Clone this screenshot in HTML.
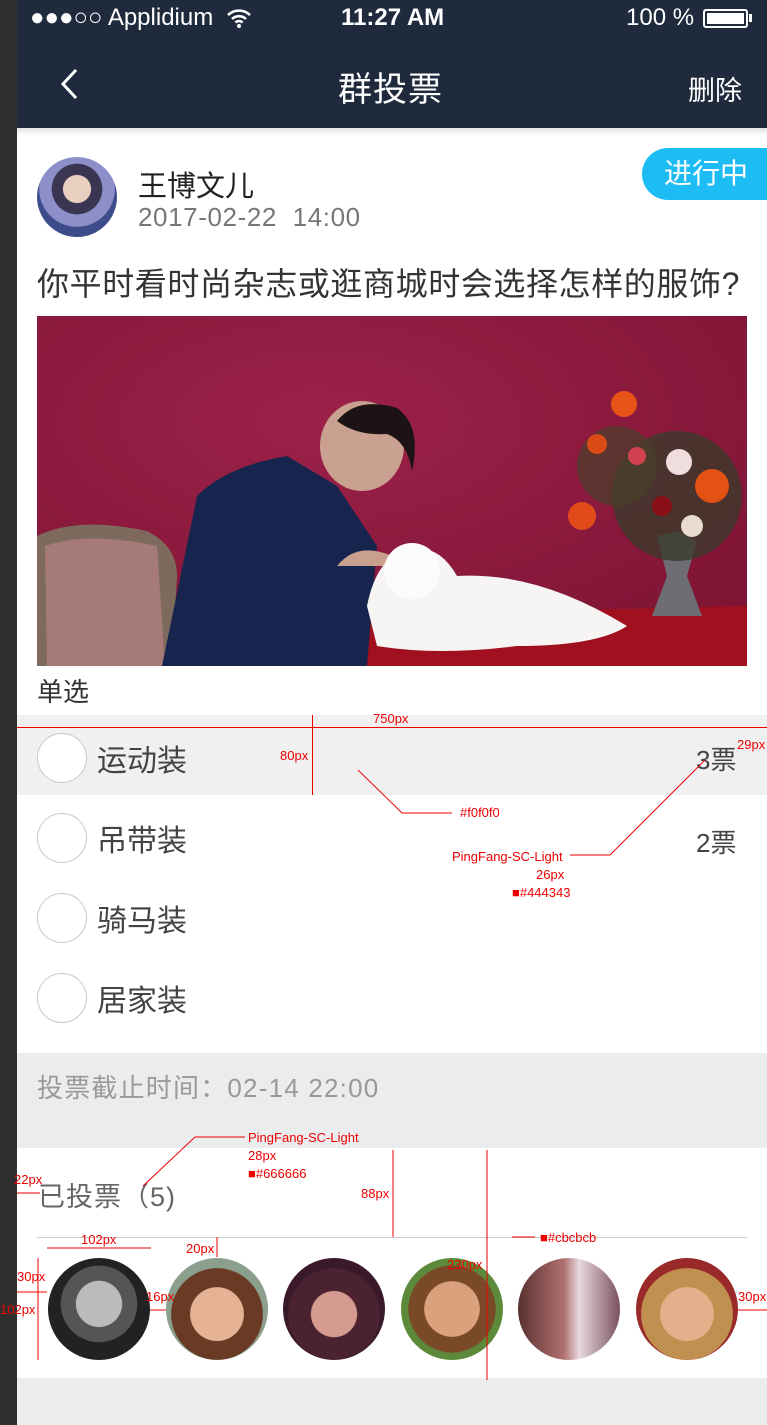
<!DOCTYPE html>
<html><head><meta charset="utf-8"><style>
*{margin:0;padding:0;box-sizing:border-box}
body{width:767px;height:1425px;position:relative;background:#ebecee;font-family:"Liberation Sans","Noto Sans CJK SC",sans-serif;overflow:hidden}
.a{position:absolute}
.r{color:#e00;font-size:13px;position:absolute;white-space:nowrap}
</style></head><body>
<div class="a" style="left:0;top:0;width:17px;height:1425px;background:#2f2f2f"></div>
<div class="a" style="left:17px;top:0;width:750px;height:128px;background:#1f2a3c"></div>
<div class="a" style="left:30px;top:4px;color:#fff;font-size:24px">●●●○○ Applidium</div>
<svg class="a" style="left:226px;top:8px" width="26" height="20" viewBox="0 0 26 20"><path d="M2 7a16 16 0 0 1 22 0M6 11a10 10 0 0 1 14 0M9.5 14.5a5 5 0 0 1 7 0" stroke="#fff" stroke-width="2.6" fill="none"/><circle cx="13" cy="18" r="2" fill="#fff"/></svg>
<div class="a" style="left:341px;top:4px;color:#fff;font-size:24px;font-weight:bold">11:27 AM</div>
<div class="a" style="left:626px;top:4px;color:#fff;font-size:24px">100 %</div>
<div class="a" style="left:703px;top:9px;width:45px;height:19px;border:2px solid #fff;border-radius:3px;padding:2px"><div style="background:#fff;width:100%;height:100%"></div></div>
<div class="a" style="left:749px;top:14px;width:3px;height:8px;background:#fff"></div>
<svg class="a" style="left:58px;top:68px" width="22" height="32"><path d="M18 2L5 16l13 14" stroke="#fff" stroke-width="3" fill="none"/></svg>
<div class="a" style="left:338px;top:62px;color:#fff;font-size:34px;letter-spacing:1px">群投票</div>
<div class="a" style="left:688px;top:69px;color:#fff;font-size:27px">删除</div>
<div class="a" style="left:17px;top:128px;width:750px;height:925px;background:#fff"></div>
<div class="a" style="left:17px;top:128px;width:750px;height:8px;background:linear-gradient(#e4e4e4,#fff)"></div>
<div class="a" style="left:37px;top:157px;width:80px;height:80px;border-radius:50%;background:radial-gradient(circle at 50% 40%,#e8cfc0 0 22%,#3a3550 23% 40%,#8d8fc8 41% 60%,#3d4c8a 61%)"></div>
<div class="a" style="left:138px;top:163px;font-size:29px;color:#222">王博文儿</div>
<div class="a" style="left:138px;top:202px;font-size:26px;color:#777;letter-spacing:0.6px">2017-02-22&nbsp;&nbsp;14:00</div>
<div class="a" style="left:642px;top:148px;width:125px;height:52px;background:#1ebcf5;border-radius:26px 0 0 26px;color:#fff;font-size:28px;line-height:52px;padding-left:22px">进行中</div>
<div class="a" style="left:37px;top:259px;font-size:32px;color:#333;white-space:nowrap;letter-spacing:0.6px">你平时看时尚杂志或逛商城时会选择怎样的服饰?</div>
<svg class="a" style="left:37px;top:316px" width="710" height="350" viewBox="0 0 710 350">
<defs><radialGradient id="g" cx="40%" cy="30%" r="80%"><stop offset="0" stop-color="#9c2149"/><stop offset="1" stop-color="#7e1434"/></radialGradient></defs>
<rect width="710" height="350" fill="url(#g)"/>
<path d="M300 350L320 300L500 295L710 290V350Z" fill="#a0101e"/>
<path d="M0 220Q40 200 110 215Q140 230 140 260L135 350H0Z" fill="#7d6a5c"/>
<path d="M8 230Q50 215 120 230L128 350H10Z" fill="#a57a78"/>
<path d="M125 350L160 180Q190 150 250 140L300 170L340 230L330 350Z" fill="#17244e"/>
<ellipse cx="325" cy="130" rx="42" ry="45" fill="#caa090"/>
<path d="M300 105Q320 80 360 92Q385 110 375 155Q370 125 350 118Q320 120 300 105Z" fill="#1c1414"/>
<path d="M300 250Q320 225 355 240L370 250Z" fill="#c9a08e"/>
<path d="M330 290Q340 240 370 235Q400 225 420 260Q500 255 590 310Q560 330 480 330Q400 340 340 330Z" fill="#f6f5f3"/>
<circle cx="375" cy="255" r="28" fill="#fbfbfb"/>
<path d="M620 220L640 215L660 225L650 260L665 300H615L630 260Z" fill="#6d6d73"/>
<circle cx="640" cy="180" r="65" fill="#3b3a2a" opacity=".8"/>
<circle cx="580" cy="150" r="40" fill="#48402a" opacity=".7"/>
<circle cx="545" cy="200" r="14" fill="#e24a1a"/><circle cx="587" cy="88" r="13" fill="#e85418"/>
<circle cx="675" cy="170" r="17" fill="#e35115"/><circle cx="642" cy="146" r="13" fill="#f0dede"/>
<circle cx="655" cy="210" r="11" fill="#e8ddd0"/><circle cx="560" cy="128" r="10" fill="#d84a16"/>
<circle cx="600" cy="140" r="9" fill="#d04250"/><circle cx="625" cy="190" r="10" fill="#8a1018"/>
</svg>
<div class="a" style="left:37px;top:672px;font-size:26px;color:#333">单选</div>
<div class="a" style="left:17px;top:715px;width:750px;height:80px;background:#f0f0f0"></div>
<div class="a" style="left:37px;top:733px;width:50px;height:50px;border-radius:50%;border:1px solid #c8c8c8;background:#fff"></div>
<div class="a" style="left:37px;top:813px;width:50px;height:50px;border-radius:50%;border:1px solid #c8c8c8;background:#fff"></div>
<div class="a" style="left:37px;top:893px;width:50px;height:50px;border-radius:50%;border:1px solid #c8c8c8;background:#fff"></div>
<div class="a" style="left:37px;top:973px;width:50px;height:50px;border-radius:50%;border:1px solid #c8c8c8;background:#fff"></div>
<div class="a" style="left:97px;top:736px;font-size:30px;color:#444343">运动装</div>
<div class="a" style="left:97px;top:816px;font-size:30px;color:#444343">吊带装</div>
<div class="a" style="left:97px;top:896px;font-size:30px;color:#444343">骑马装</div>
<div class="a" style="left:97px;top:976px;font-size:30px;color:#444343">居家装</div>
<div class="a" style="left:696px;top:740px;font-size:26px;color:#444343">3票</div>
<div class="a" style="left:696px;top:823px;font-size:26px;color:#444343">2票</div>
<div class="a" style="left:37px;top:1068px;font-size:26px;color:#999;letter-spacing:1.2px">投票截止时间：02-14 22:00</div>
<div class="a" style="left:17px;top:1148px;width:750px;height:230px;background:#fff"></div>
<div class="a" style="left:38px;top:1175px;font-size:27px;color:#666;letter-spacing:1px">已投票（5)</div>
<div class="a" style="left:37px;top:1237px;width:710px;height:1px;background:#cbcbcb"></div>
<div class="a" style="left:48px;top:1258px;width:102px;height:102px;border-radius:50%;background:radial-gradient(circle at 50% 45%,#bbb 0 30%,#555 31% 50%,#222 51%)"></div>
<div class="a" style="left:166px;top:1258px;width:102px;height:102px;border-radius:50%;background:radial-gradient(circle at 50% 55%,#e6b296 0 35%,#6a3a24 36% 60%,#8aa08c 61%)"></div>
<div class="a" style="left:283px;top:1258px;width:102px;height:102px;border-radius:50%;background:radial-gradient(circle at 50% 55%,#d59a90 0 30%,#4a2230 31% 60%,#3a1a2a 61%)"></div>
<div class="a" style="left:401px;top:1258px;width:102px;height:102px;border-radius:50%;background:radial-gradient(circle at 50% 50%,#d9a27c 0 38%,#7a4a28 39% 60%,#5d8a3a 61%)"></div>
<div class="a" style="left:518px;top:1258px;width:102px;height:102px;border-radius:50%;background:linear-gradient(90deg,#5a3030,#b07070 45%,#e8d8e0 60%,#7a5060)"></div>
<div class="a" style="left:636px;top:1258px;width:102px;height:102px;border-radius:50%;background:radial-gradient(circle at 50% 55%,#e2b08a 0 35%,#c09050 36% 60%,#9a2a2a 61%)"></div>
<div class="a" style="left:17px;top:727px;width:750px;height:1px;background:#e00"></div>
<div class="a" style="left:312px;top:715px;width:1px;height:80px;background:#e00"></div>
<div class="r" style="left:373px;top:711px">750px</div>
<div class="r" style="left:280px;top:748px">80px</div>
<div class="r" style="left:460px;top:805px">#f0f0f0</div>
<div class="r" style="left:452px;top:849px">PingFang-SC-Light</div>
<div class="r" style="left:536px;top:867px">26px</div>
<div class="r" style="left:512px;top:885px">■#444343</div>
<div class="r" style="left:737px;top:737px">29px</div>
<svg class="a" style="left:0;top:0" width="767" height="1425"><path d="M358 770L402 813H452M570 855H610L705 760M143 1186L195 1137H245M40 1193H17M47 1248H151M393 1150V1237M487 1150V1380M217 1237V1257M38 1258V1360M17 1292H47M150 1310H166M738 1310H767M512 1237H535" stroke="#e00" fill="none"/></svg>
<div class="r" style="left:248px;top:1130px">PingFang-SC-Light</div>
<div class="r" style="left:248px;top:1148px">28px</div>
<div class="r" style="left:248px;top:1166px">■#666666</div>
<div class="r" style="left:14px;top:1172px">22px</div>
<div class="r" style="left:361px;top:1186px">88px</div>
<div class="r" style="left:540px;top:1230px">■#cbcbcb</div>
<div class="r" style="left:81px;top:1232px">102px</div>
<div class="r" style="left:186px;top:1241px">20px</div>
<div class="r" style="left:447px;top:1257px">230px</div>
<div class="r" style="left:17px;top:1269px">30px</div>
<div class="r" style="left:0;top:1302px">102px</div>
<div class="r" style="left:146px;top:1289px">16px</div>
<div class="r" style="left:738px;top:1289px">30px</div>
</body></html>
